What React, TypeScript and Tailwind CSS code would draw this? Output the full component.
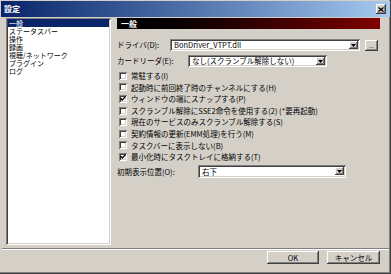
const raised =
  "shadow-[inset_-1px_-1px_#404040,inset_1px_1px_#ffffff,inset_-2px_-2px_#808080,inset_2px_2px_#d4d0c8]";
const sunken =
  "shadow-[inset_1px_1px_#808080,inset_-1px_-1px_#ffffff,inset_2px_2px_#404040,inset_-2px_-2px_#d4d0c8]";

function Arrow() {
  return (
    <div className={`flex h-[8px] w-[9px] items-center justify-center bg-[#d4d0c8] ${raised}`}>
      <svg width="5" height="3" viewBox="0 0 5 3">
        <path d="M0 0h5L2.5 3z" fill="#000" />
      </svg>
    </div>
  );
}

function Combo({ value, w, h = "h-[12px]" }: { value: string; w: string; h?: string }) {
  return (
    <div className={`flex ${w} ${h} items-center bg-white pr-[2px] ${sunken}`}>
      <span className="flex-1 pl-[4px] leading-none">{value}</span>
      <Arrow />
    </div>
  );
}

function Check({ label, checked }: { label: string; checked?: boolean }) {
  return (
    <div className="flex h-[11.6px] items-center">
      <div className={`mr-[4px] flex h-[8px] w-[8px] items-center justify-center bg-white ${sunken}`}>
        {checked && (
          <svg width="6" height="5" viewBox="0 0 6 5">
            <path d="M0.5 2.2L2.2 4L5.5 0.6" stroke="#000" strokeWidth="1.3" fill="none" />
          </svg>
        )}
      </div>
      <span className="leading-none">{label}</span>
    </div>
  );
}

const pages = ["一般", "ステータスバー", "操作", "録画", "視聴/ネットワーク", "プラグイン", "ログ"];

export default function App() {
  return (
    <div
      className="relative flex h-[274px] w-[391px] flex-col overflow-hidden bg-[#d4d0c8] text-[7.5px] text-black shadow-[inset_-1px_-1px_#404040,inset_-2px_-2px_#808080]"
      style={{ fontFamily: "'Noto Sans CJK JP', 'Liberation Sans', sans-serif" }}
    >
      {/* title bar */}
      <div className="mx-[1px] mt-[1px] flex h-[16px] items-center bg-gradient-to-r from-[#0a246a] to-[#a6caf0] pl-[3px] pr-[4px]">
        <span className="flex-1 text-[8px] font-bold text-white">設定</span>
        <div className={`flex h-[10px] w-[10px] items-center justify-center bg-[#d4d0c8] ${raised}`}>
          <svg width="6" height="5" viewBox="0 0 6 5">
            <path d="M0.5 0.5L5.5 4.5M5.5 0.5L0.5 4.5" stroke="#000" strokeWidth="1.3" />
          </svg>
        </div>
      </div>

      <div className="flex flex-1 pl-[6px] pr-[11px] pt-[1px]">
        {/* page list */}
        <div className={`h-[227px] w-[105px] bg-white p-[2px] pt-[1px] ${sunken}`}>
          {pages.map((p, i) => (
            <div
              key={p}
              className={`flex h-[8px] items-center pl-[1px] text-[7px] leading-[7px] ${i === 0 ? "bg-[#0a246a] text-white" : ""}`}
            >
              {p}
            </div>
          ))}
        </div>

        {/* settings panel */}
        <div className="ml-[6px] flex flex-1 flex-col">
          <div className="flex h-[11px] items-center bg-gradient-to-r from-black to-[#800000] pl-[4px] text-[8px] font-bold text-white">
            一般
          </div>
          <div className="mt-[10px] flex items-center">
            <span className="w-[53px]">ドライバ(D):</span>
            <Combo value="BonDriver_VTPT.dll" w="w-[190px]" />
            <div className={`ml-[5px] flex h-[11px] w-[13px] items-end justify-center bg-[#d4d0c8] pb-[2px] text-[6px] leading-none ${raised}`}>
              ...
            </div>
          </div>
          <div className="mt-[4px] flex items-center">
            <span className="w-[71px]">カードリーダ(E):</span>
            <Combo value="なし(スクランブル解除しない)" w="w-[139px]" />
          </div>
          <div className="mt-[3px] flex flex-col pl-[2px]">
            <Check label="常駐する(I)" />
            <Check label="起動時に前回終了時のチャンネルにする(H)" />
            <Check label="ウィンドウの端にスナップする(P)" checked />
            <Check label="スクランブル解除にSSE2命令を使用する(2) (*要再起動)" />
            <Check label="現在のサービスのみスクランブル解除する(S)" />
            <Check label="契約情報の更新(EMM処理)を行う(M)" />
            <Check label="タスクバーに表示しない(B)" />
            <Check label="最小化時にタスクトレイに格納する(T)" checked />
          </div>
          <div className="mt-[2px] flex items-center">
            <span className="w-[81px]">初期表示位置(O):</span>
            <Combo value="右下" w="w-[148px]" h="h-[13px]" />
          </div>
        </div>
      </div>

      {/* footer */}
      <div className="mx-[2px] mb-[2px] flex h-[24px] flex-col border-t border-t-[#808080] shadow-[inset_0_1px_#ffffff]">
        <div className="mt-[2px] flex justify-end gap-[8px] pr-[9px]">
          <button className={`flex h-[13px] w-[52px] items-center justify-center bg-[#d4d0c8] leading-none ${raised}`}>
            OK
          </button>
          <button className={`flex h-[13px] w-[53px] items-center justify-center bg-[#d4d0c8] leading-none ${raised}`}>
            キャンセル
          </button>
        </div>
      </div>
    </div>
  );
}
